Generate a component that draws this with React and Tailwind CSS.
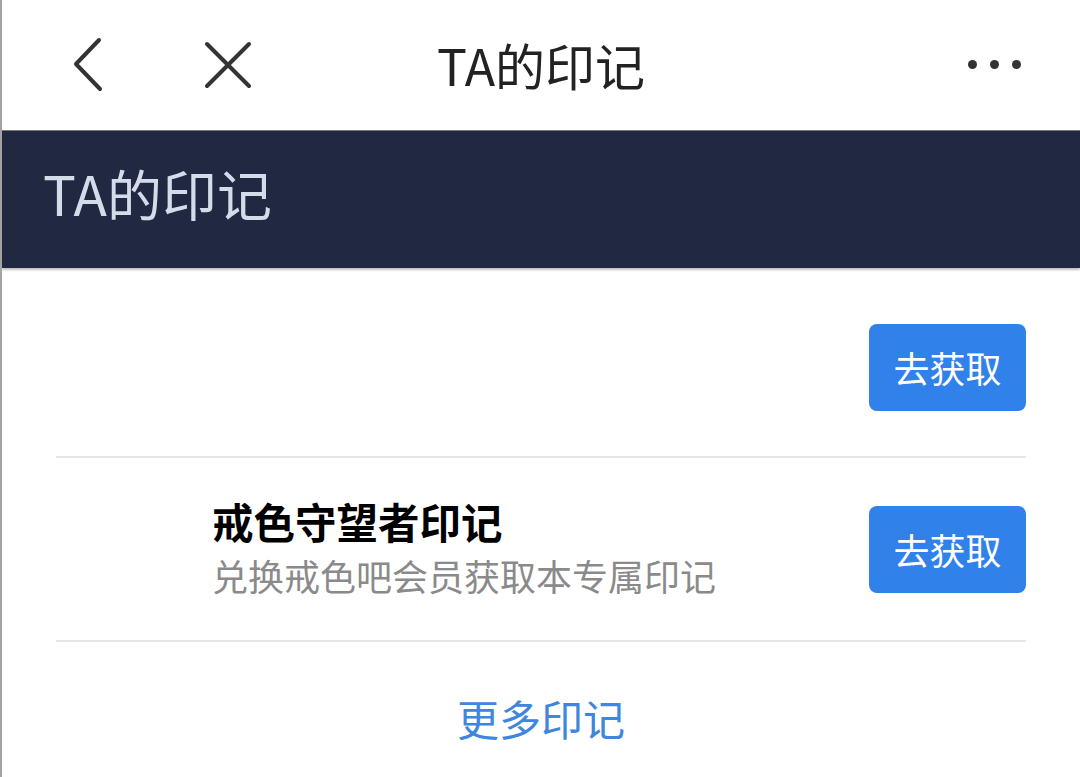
import React from 'react';

const font = { fontFamily: '"Noto Sans CJK SC", "Noto Sans", sans-serif' };

function GetButton() {
  return (
    <button className="w-[157px] h-[87px] rounded-[8px] bg-[#3181ea] text-white text-[36px] leading-none shrink-0">
      去获取
    </button>
  );
}

export default function App() {
  return (
    <div
      className="w-[1080px] h-[777px] bg-white overflow-hidden border-l-2 border-[#a3a3a3] flex flex-col"
      style={font}
    >
      {/* 顶部导航 */}
      <div className="h-[130px] relative flex items-center shrink-0">
        <svg className="absolute left-[70px] top-[36px]" width="34" height="58" viewBox="0 0 34 58" fill="none">
          <path d="M27 4 L4 28 L28 53" stroke="#333" strokeWidth="4" strokeLinecap="round" strokeLinejoin="round" />
        </svg>
        <svg className="absolute left-[202px] top-[41px]" width="48" height="48" viewBox="0 0 48 48" fill="none">
          <path d="M3 3 L45 45 M45 3 L3 45" stroke="#333" strokeWidth="4" strokeLinecap="round" />
        </svg>
        <div className="w-full text-center text-[50px] text-[#222] leading-none pb-[2px]">TA的印记</div>
        <div className="absolute left-[966px] top-[60px] flex gap-[13px]">
          <span className="w-[9px] h-[9px] rounded-full bg-[#333]" />
          <span className="w-[9px] h-[9px] rounded-full bg-[#333]" />
          <span className="w-[9px] h-[9px] rounded-full bg-[#333]" />
        </div>
      </div>

      {/* 深色标题栏 */}
      <div className="h-[138px] bg-[#212842] border-t border-[#777] shadow-[0_2px_2px_rgba(0,0,0,0.25)] flex items-center pl-[41px] pb-[14px] shrink-0">
        <span className="text-[55px] text-[#d4dcea] leading-none">TA的印记</span>
      </div>

      <div className="mx-[54px] flex flex-col">
        <div className="h-[180px] mt-[10px] flex items-center justify-end border-b-2 border-[#e6e6e6]">
          <GetButton />
        </div>

        <div className="h-[184px] flex items-center border-b-2 border-[#e6e6e6]">
          <div className="w-[156px] shrink-0" />
          <div className="flex-1 flex flex-col gap-[14px] pb-[4px]">
            <div className="text-[41.5px] font-bold text-black leading-none">戒色守望者印记</div>
            <div className="text-[36px] text-[#8a8a8a] leading-none">兑换戒色吧会员获取本专属印记</div>
          </div>
          <GetButton />
        </div>

        <div className="h-[134px] flex items-center justify-center text-[42px] text-[#3e86de] leading-none pt-[18px]">
          更多印记
        </div>
      </div>
    </div>
  );
}
